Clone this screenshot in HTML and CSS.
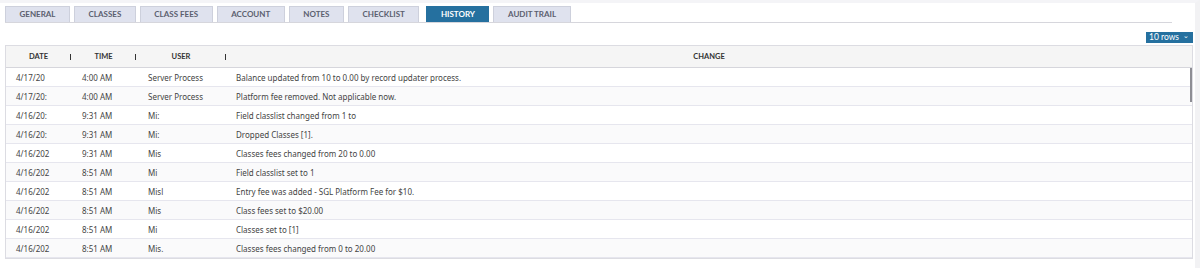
FILE: index.html
```html
<!DOCTYPE html>
<html lang="en">
<head>
    <meta charset="UTF-8">
    <title>History</title>
    <link rel="stylesheet" href="styles.css">
</head>
<body>
<div class="page">
    <div class="tabs">
        <div class="tab">GENERAL</div>
        <div class="tab">CLASSES</div>
        <div class="tab">CLASS FEES</div>
        <div class="tab">ACCOUNT</div>
        <div class="tab">NOTES</div>
        <div class="tab">CHECKLIST</div>
        <div class="tab active">HISTORY</div>
        <div class="tab">AUDIT TRAIL</div>
    </div>

    <div class="toolbar">
        <div class="rows-btn">10 rows <span class="caret">&#8964;</span></div>
    </div>

    <div class="grid">
        <div class="row head">
            <div class="c date">DATE<span class="sep"></span></div>
            <div class="c time">TIME<span class="sep"></span></div>
            <div class="c user">USER<span class="sep"></span></div>
            <div class="c change">CHANGE</div>
        </div>
        <div class="body">
            <div class="row"><div class="c date">4/17/20</div><div class="c time">4:00 AM</div><div class="c user">Server Process</div><div class="c change">Balance updated from 10 to 0.00 by record updater process.</div></div>
            <div class="row"><div class="c date">4/17/20:</div><div class="c time">4:00 AM</div><div class="c user">Server Process</div><div class="c change">Platform fee removed. Not applicable now.</div></div>
            <div class="row"><div class="c date">4/16/20:</div><div class="c time">9:31 AM</div><div class="c user">Mi:</div><div class="c change">Field classlist changed from 1 to</div></div>
            <div class="row"><div class="c date">4/16/20:</div><div class="c time">9:31 AM</div><div class="c user">Mi:</div><div class="c change">Dropped Classes [1].</div></div>
            <div class="row"><div class="c date">4/16/202</div><div class="c time">9:31 AM</div><div class="c user">Mis</div><div class="c change">Classes fees changed from 20 to 0.00</div></div>
            <div class="row"><div class="c date">4/16/202</div><div class="c time">8:51 AM</div><div class="c user">Mi</div><div class="c change">Field classlist set to 1</div></div>
            <div class="row"><div class="c date">4/16/202</div><div class="c time">8:51 AM</div><div class="c user">Misl</div><div class="c change">Entry fee was added - SGL Platform Fee for $10.</div></div>
            <div class="row"><div class="c date">4/16/202</div><div class="c time">8:51 AM</div><div class="c user">Mis</div><div class="c change">Class fees set to $20.00</div></div>
            <div class="row"><div class="c date">4/16/202</div><div class="c time">8:51 AM</div><div class="c user">Mi</div><div class="c change">Classes set to [1]</div></div>
            <div class="row"><div class="c date">4/16/202</div><div class="c time">8:51 AM</div><div class="c user">Mis.</div><div class="c change">Classes fees changed from 0 to 20.00</div></div>
            <div class="scroll-thumb"></div>
        </div>
    </div>
</div>
</body>
</html>
```

FILE: styles.css
```css
body { margin: 0; background: #fff; font-family: "Noto Sans", "Open Sans", sans-serif; color: #444; height: 268px; overflow: hidden; }
.page { border-top: 3px solid #f4f4f7; border-right: 5px solid #f2f2f4; height: 265px; padding: 3px 2px 0 5px; }

.tabs { display: flex; gap: 4px; border-bottom: 1px solid #d6d6dc; width: 1167px; height: 16px; }
.tab { font-family: Lato, sans-serif; font-weight: bold; font-size: 8px; color: #5b5f6e; background: #dfe2ee; border: 1px solid #cdd0dc; border-bottom: none; padding: 0 13.5px; line-height: 15px; height: 15px; }
.tab.active { background: #25709f; border-color: #25709f; color: #fff; margin-left: 3px; }

.toolbar { display: flex; justify-content: flex-end; padding-top: 9px; height: 12px; margin-bottom: 1px; }
.rows-btn { background: #25709f; color: #fff; font-family: Lato, sans-serif; font-size: 8.5px; line-height: 11px; height: 11px; padding: 0 4px 0 3px; display: flex; gap: 4px; }
.rows-btn .caret { font-size: 7px; line-height: 7px; }

.grid { border: 1px solid #dcdce2; width: 1186px; }
.row { display: flex; height: 18px; border-bottom: 1px solid #e6e6ee; align-items: center; font-size: 8px; }
.body .row:nth-child(even) { background: #fafafb; }
.body .row:last-of-type { border-bottom: none; }
.row.head { height: 21px; background: #f5f5f5; border-bottom: 1px solid #d6d6dc; font-family: Lato, sans-serif; font-weight: bold; font-size: 7.5px; color: #333; }
.c { white-space: nowrap; overflow: hidden; }
.c.date { width: 65px; padding-left: 10px; box-sizing: border-box; }
.c.time { width: 65px; padding-left: 11px; box-sizing: border-box; }
.c.user { width: 90px; padding-left: 12px; box-sizing: border-box; }
.c.change { flex: 1; padding-left: 10px; }
.head .c { position: relative; text-align: center; padding: 0; }
.head .sep { position: absolute; right: 0; top: 2px; width: 1px; height: 6px; background: #333; }
.body { position: relative; }
.scroll-thumb { position: absolute; right: 0; top: 0; width: 2px; height: 34px; background: #8d8d94; }
```
